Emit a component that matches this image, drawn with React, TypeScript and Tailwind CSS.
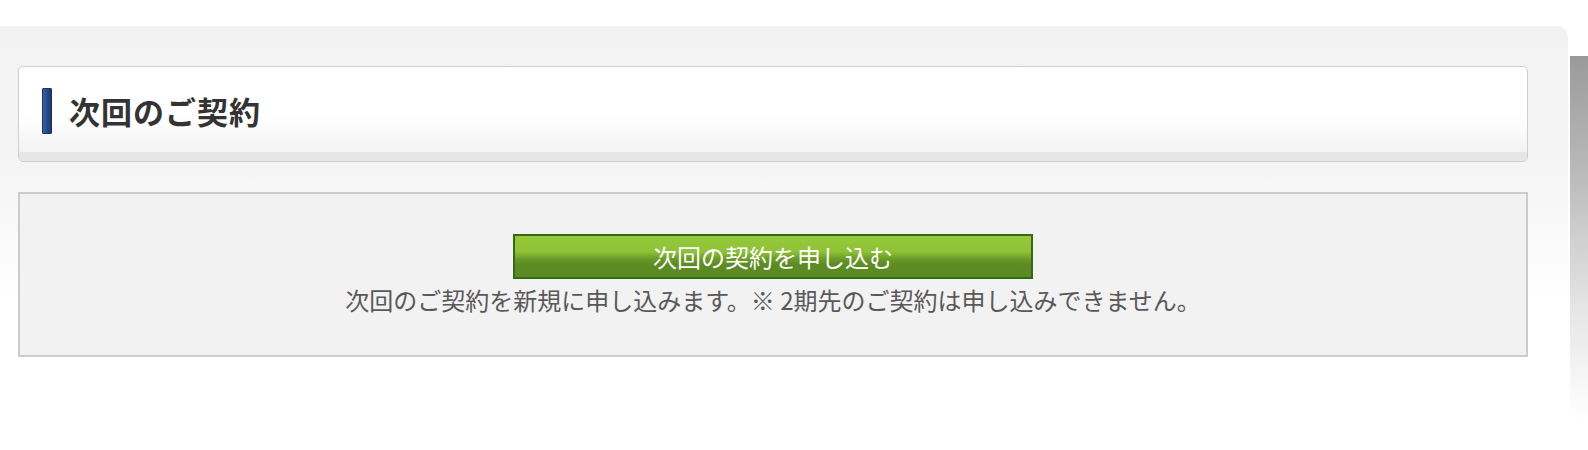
import React from 'react';

const App: React.FC = () => {
  return (
    <div className="w-[1588px] h-[450px] bg-white overflow-hidden flex pt-[26px] font-['Noto_Sans_CJK_JP',sans-serif]">
      {/* outer panel */}
      <div className="w-[1568px] h-[424px] shrink-0 rounded-tr-[10px] bg-[linear-gradient(to_bottom,#f2f2f2_0%,#f3f3f3_25%,#f8f8f8_45%,#ffffff_65%)] pl-[18px] pr-[40px] pt-[40px]">
        {/* heading card */}
        <div className="h-[96px] border border-[#cfcfcf] rounded-[5px] overflow-hidden flex flex-col bg-[linear-gradient(to_bottom,#ffffff_0%,#ffffff_50%,#f3f3f3_90%)]">
          <div className="flex items-center h-[85px] pl-[23px] pt-[2px]">
            <div className="w-[10px] h-[46px] rounded-[1px] border border-[#1b3266] bg-[linear-gradient(to_right,#3b5fa6,#2b4a8c_50%,#1d3870)]" />
            <h2 className="ml-[17px] text-[31px] leading-none font-bold text-[#333333] tracking-[1px]">次回のご契約</h2>
          </div>
          <div className="flex-1 bg-[#e6e6e6]" />
        </div>

        {/* contract box */}
        <div className="mt-[30px] h-[165px] border-2 border-[#cccccc] bg-[#f2f2f2] flex flex-col items-center pt-[40px]">
          <button className="w-[520px] h-[45px] border-2 border-[#356a14] bg-[linear-gradient(to_bottom,#95c83a_0%,#8fc236_38%,#6c9c29_55%,#5b8b22_70%,#5a8a22_100%)] text-white text-[24px] leading-none flex items-center justify-center">
            次回の契約を申し込む
          </button>
          <p className="mt-[6px] text-[24px] leading-[30px] text-[#595959]">
            次回のご契約を新規に申し込みます。※ 2期先のご契約は申し込みできません。
          </p>
        </div>
      </div>

      {/* right side shadow */}
      <div className="ml-[2px] mt-[30px] w-[18px] h-[364px] bg-[linear-gradient(to_bottom,#9a9a9a_0%,#b8b8b8_30%,#e6e6e6_70%,#ffffff_100%)]" />
    </div>
  );
};

export default App;
